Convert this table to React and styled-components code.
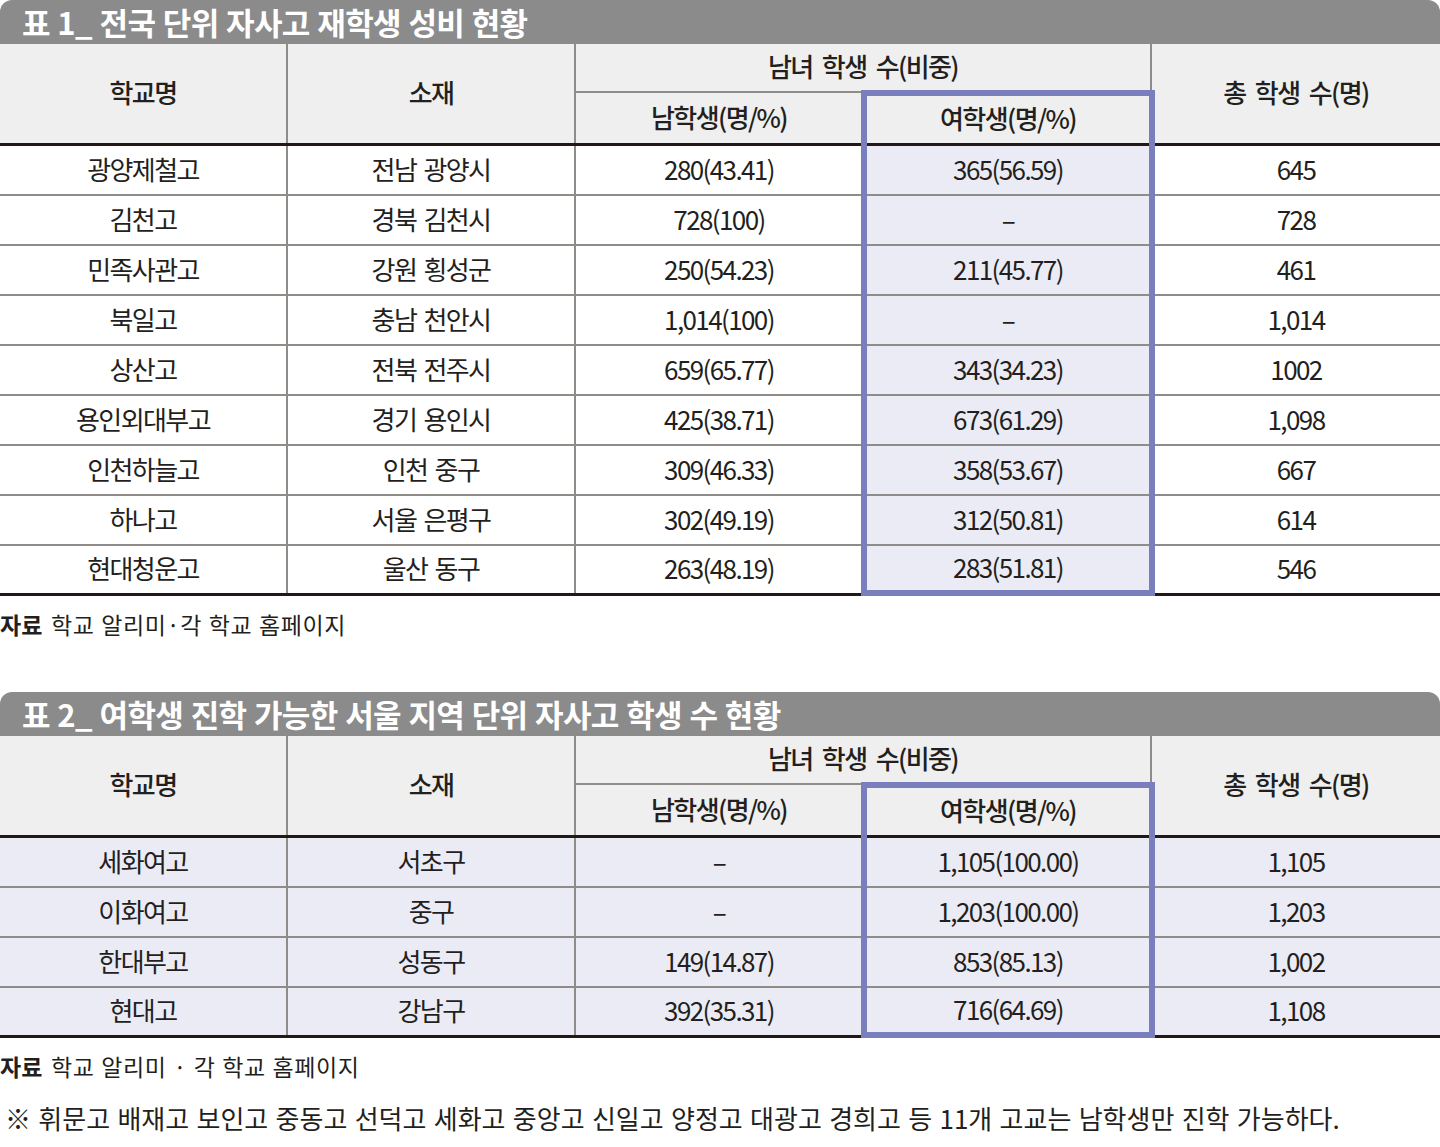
import styled, { createGlobalStyle } from "styled-components";

const C = {
  text: "#231f20",
  title: "#8b8b8b",
  head: "#eeefee",
  line: "#8e8b89",
  dark: "#231815",
  lav: "#ebebf5",
  purple: "#797ebd",
};

const table1 = [
  ["광양제철고", "전남 광양시", "280(43.41)", "365(56.59)", "645"],
  ["김천고", "경북 김천시", "728(100)", "–", "728"],
  ["민족사관고", "강원 횡성군", "250(54.23)", "211(45.77)", "461"],
  ["북일고", "충남 천안시", "1,014(100)", "–", "1,014"],
  ["상산고", "전북 전주시", "659(65.77)", "343(34.23)", "1002"],
  ["용인외대부고", "경기 용인시", "425(38.71)", "673(61.29)", "1,098"],
  ["인천하늘고", "인천 중구", "309(46.33)", "358(53.67)", "667"],
  ["하나고", "서울 은평구", "302(49.19)", "312(50.81)", "614"],
  ["현대청운고", "울산 동구", "263(48.19)", "283(51.81)", "546"],
];

const table2 = [
  ["세화여고", "서초구", "–", "1,105(100.00)", "1,105"],
  ["이화여고", "중구", "–", "1,203(100.00)", "1,203"],
  ["한대부고", "성동구", "149(14.87)", "853(85.13)", "1,002"],
  ["현대고", "강남구", "392(35.31)", "716(64.69)", "1,108"],
];

const GlobalStyle = createGlobalStyle`
  body {
    margin: 0;
    background: #fff;
    color: ${C.text};
    font-family: "Noto Sans CJK KR", "Noto Sans", sans-serif;
  }
`;

const Page = styled.div`
  width: 1440px;
  display: flex;
  flex-direction: column;
`;

const Section = styled.section`
  margin-top: ${(p) => p.$gap ?? 0}px;
`;

const TitleBar = styled.h2`
  margin: 0;
  height: 44px;
  display: flex;
  align-items: center;
  padding: 0 0 2px 22px;
  box-sizing: border-box;
  background: ${C.title};
  border-radius: 12px 12px 0 0;
  color: #fff;
  font-size: 31px;
  font-weight: 700;
  letter-spacing: -0.6px;
  word-spacing: 1px;
  line-height: 1;
`;

const Table = styled.div`
  display: flex;
  align-items: flex-start;
  font-size: 26px;
  letter-spacing: -1.6px;
  word-spacing: 3px;
  line-height: 1;
`;

const Column = styled.div`
  width: ${(p) => p.$w}px;
  display: flex;
  flex-direction: column;
`;

const GroupBody = styled.div`
  display: flex;
  align-items: flex-start;
`;

const HighlightBox = styled.div`
  position: relative;
  z-index: 1;
  box-sizing: border-box;
  width: 294px;
  margin: -3px -3px 0 -1px;
  border: 6px solid ${C.purple};
  background: ${C.lav};
  display: flex;
  flex-direction: column;
`;

const Cell = styled.div`
  box-sizing: border-box;
  height: ${(p) => p.$h ?? 50}px;
  display: flex;
  align-items: center;
  justify-content: center;
  white-space: nowrap;
  background: ${(p) => p.$bg ?? "transparent"};
  border-right: ${(p) => (p.$divider ? `2px solid ${C.line}` : "none")};
  border-bottom: ${(p) => (p.$line ? `2px solid ${C.line}` : "none")};
  padding-bottom: 3px;
`;

const HeadCell = styled(Cell)`
  background: ${C.head};
  font-weight: 500;
  word-spacing: 5px;
`;

const Rule = styled.div`
  height: 3px;
  background: ${C.dark};
`;

const Source = styled.p`
  margin: ${(p) => p.$gap}px 0 0;
  font-size: 23px;
  line-height: 30px;
  letter-spacing: 0.6px;
  word-spacing: 1px;

  b {
    font-weight: 700;
    letter-spacing: 0;
    margin-right: 2px;
  }
`;

const Footnote = styled.p`
  margin: 19px 0 0;
  padding-left: 5px;
  font-size: 26px;
  line-height: 36px;
  letter-spacing: 0;
  word-spacing: 1.5px;
`;

function BodyCells({ rows, idx, divider, bg, lastH }) {
  return rows.map((r, i) => {
    const last = i === rows.length - 1;
    return (
      <Cell key={i} $h={last ? lastH : 50} $line={!last} $divider={divider} $bg={bg}>
        {r[idx]}
      </Cell>
    );
  });
}

function DataTable({ rows, bg }) {
  return (
    <Table>
      <Column $w={288}>
        <HeadCell $h={99} $divider>학교명</HeadCell>
        <Rule />
        <BodyCells rows={rows} idx={0} divider bg={bg} lastH={47} />
        <Rule />
      </Column>
      <Column $w={288}>
        <HeadCell $h={99} $divider>소재</HeadCell>
        <Rule />
        <BodyCells rows={rows} idx={1} divider bg={bg} lastH={47} />
        <Rule />
      </Column>
      <Column $w={576}>
        <HeadCell $h={49} $divider $line>남녀 학생 수(비중)</HeadCell>
        <GroupBody>
          <Column $w={286}>
            <HeadCell $h={50}>남학생(명/%)</HeadCell>
            <Rule />
            <BodyCells rows={rows} idx={2} bg={bg} lastH={47} />
            <Rule />
          </Column>
          <HighlightBox>
            <HeadCell $h={47}>여학생(명/%)</HeadCell>
            <Rule />
            <BodyCells rows={rows} idx={3} lastH={44} />
          </HighlightBox>
        </GroupBody>
      </Column>
      <Column $w={288}>
        <HeadCell $h={99}>총 학생 수(명)</HeadCell>
        <Rule />
        <BodyCells rows={rows} idx={4} bg={bg} lastH={47} />
        <Rule />
      </Column>
    </Table>
  );
}

export default function App() {
  return (
    <Page>
      <GlobalStyle />
      <Section>
        <TitleBar>표 1_ 전국 단위 자사고 재학생 성비 현황</TitleBar>
        <DataTable rows={table1} />
      </Section>
      <Source $gap={13}>
        <b>자료</b> 학교 알리미·각 학교 홈페이지
      </Source>
      <Section $gap={53}>
        <TitleBar>표 2_ 여학생 진학 가능한 서울 지역 단위 자사고 학생 수 현황</TitleBar>
        <DataTable rows={table2} bg={C.lav} />
      </Section>
      <Source $gap={13}>
        <b>자료</b> 학교 알리미 · 각 학교 홈페이지
      </Source>
      <Footnote>
        ※ 휘문고 배재고 보인고 중동고 선덕고 세화고 중앙고 신일고 양정고 대광고 경희고 등 11개 고교는 남학생만 진학 가능하다.
      </Footnote>
    </Page>
  );
}
